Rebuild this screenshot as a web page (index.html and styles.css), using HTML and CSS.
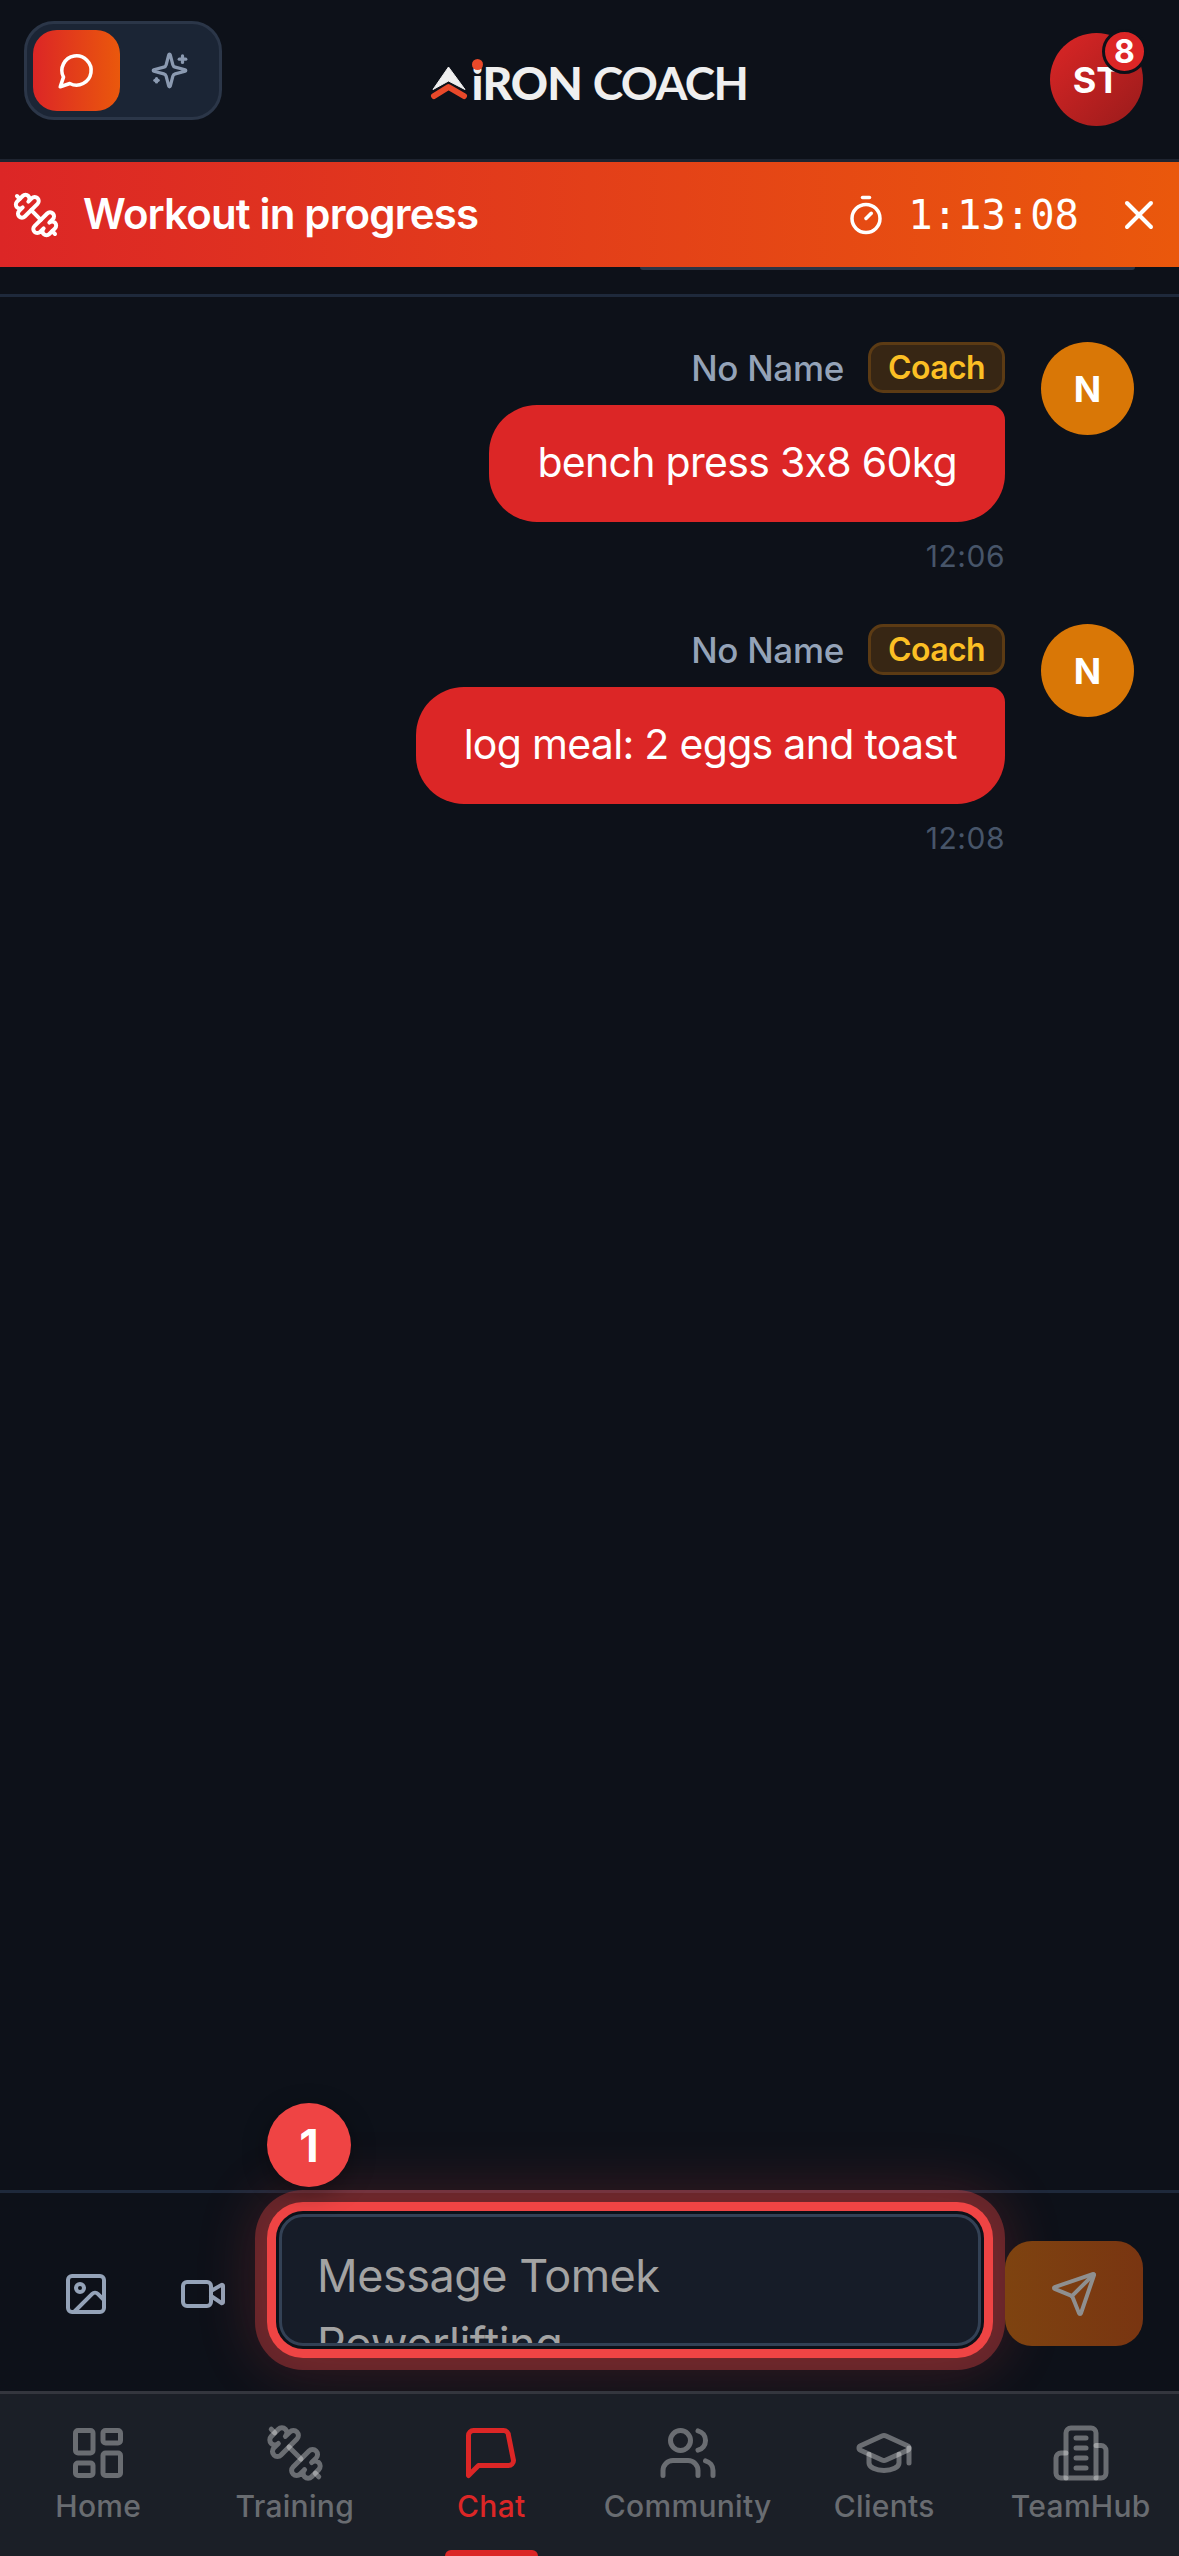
FILE: index.html
```html
<!DOCTYPE html>
<html lang="en">
<head>
<meta charset="utf-8">
<title>AiRON Coach</title>
<link rel="stylesheet" href="styles.css">
</head>
<body>
<div class="app">
  <header class="header">
    <div class="toggle">
      <div class="toggle-btn active">
        <svg class="ic ic39 thick" viewBox="0 0 24 24"><path d="M7.9 20A9 9 0 1 0 4 16.1L2 22Z"/></svg>
      </div>
      <div class="toggle-btn spark">
        <svg class="ic ic39" viewBox="0 0 24 24"><path d="M9.937 15.5A2 2 0 0 0 8.5 14.063l-6.135-1.582a.5.5 0 0 1 0-.962L8.5 9.936A2 2 0 0 0 9.936 8.5l1.582-6.135a.5.5 0 0 1 .963 0L14.063 8.5A2 2 0 0 0 15.5 9.937l6.135 1.581a.5.5 0 0 1 0 .964L15.5 14.063a2 2 0 0 0-1.437 1.437l-1.582 6.135a.5.5 0 0 1-.963 0z"/><path d="M20 3v4"/><path d="M22 5h-4"/><path d="M4 17v2"/><path d="M5 18H3"/></svg>
      </div>
    </div>
    <div class="logo">
      <svg class="logo-mark" viewBox="0 0 38 34"><path class="logo-a" d="M18.5 1 L35 23.500 L18.500 15 L3 23.500 Z"/><path class="logo-chev" d="M4 30 L18.500 21 L34 30"/></svg>
      <span class="logo-iron"><span class="logo-i">i</span>RON</span>
      <span class="logo-coach">COACH</span>
    </div>
    <div class="avatar-wrap">
      <div class="avatar-me">ST</div>
      <div class="avatar-badge">8</div>
    </div>
  </header>

  <div class="banner">
    <div class="banner-left">
      <svg class="ic ic48" viewBox="0 0 24 24"><path d="M14.4 14.4 9.6 9.6"/><path d="M18.657 21.485a2 2 0 1 1-2.829-2.828l-1.767 1.768a2 2 0 1 1-2.829-2.829l6.364-6.364a2 2 0 1 1 2.829 2.829l-1.768 1.767a2 2 0 1 1 2.828 2.829z"/><path d="m21.5 21.5-1.4-1.4"/><path d="M3.9 3.9 2.5 2.5"/><path d="M6.404 12.768a2 2 0 1 1-2.829-2.829l1.768-1.767a2 2 0 1 1-2.828-2.829l2.828-2.828a2 2 0 1 1 2.829 2.828l1.767-1.768a2 2 0 1 1 2.829 2.829z"/></svg>
      <span class="banner-title">Workout in progress</span>
    </div>
    <div class="banner-right">
      <svg class="ic ic42" viewBox="0 0 24 24"><line x1="10" x2="14" y1="2" y2="2"/><line x1="12" x2="15" y1="14" y2="11"/><circle cx="12" cy="14" r="8"/></svg>
      <span class="timer">1:13:08</span>
      <svg class="ic ic48" viewBox="0 0 24 24"><path d="M18 6 6 18"/><path d="m6 6 12 12"/></svg>
    </div>
  </div>

  <div class="pinned"><div class="pinned-edge"></div></div>

  <main class="messages">
    <article class="msg">
      <div class="msg-body">
        <div class="msg-head"><span class="msg-name">No Name</span><span class="role">Coach</span></div>
        <div class="bubble">bench press 3x8 60kg</div>
        <time class="msg-time">12:06</time>
      </div>
      <div class="msg-avatar">N</div>
    </article>
    <article class="msg">
      <div class="msg-body">
        <div class="msg-head"><span class="msg-name">No Name</span><span class="role">Coach</span></div>
        <div class="bubble">log meal: 2 eggs and toast</div>
        <time class="msg-time">12:08</time>
      </div>
      <div class="msg-avatar">N</div>
    </article>
  </main>

  <section class="composer">
    <div class="attach">
      <div class="attach-btn">
        <svg class="ic ic48" viewBox="0 0 24 24"><rect width="18" height="18" x="3" y="3" rx="2" ry="2"/><circle cx="9" cy="9" r="2"/><path d="m21 15-3.086-3.086a2 2 0 0 0-2.828 0L6 21"/></svg>
      </div>
      <div class="attach-btn">
        <svg class="ic ic48" viewBox="0 0 24 24"><path d="m16 13 5.223 3.482a.5.5 0 0 0 .777-.416V7.870a.5.5 0 0 0-.752-.432L16 10.500"/><rect x="2" y="6" width="14" height="12" rx="2"/></svg>
      </div>
    </div>
    <div class="input-wrap">
      <div class="step">1</div>
      <div class="input"><div class="input-text">Message Tomek Powerlifting</div></div>
    </div>
    <div class="send">
      <svg class="ic ic48" viewBox="0 0 24 24"><path d="M14.536 21.686a.5.5 0 0 0 .937-.024l6.500-19a.496.496 0 0 0-.635-.635l-19 6.500a.5.5 0 0 0-.024.937l7.930 3.180a2 2 0 0 1 1.112 1.110z"/><path d="m21.854 2.147-10.940 10.939"/></svg>
    </div>
  </section>

  <nav class="nav">
    <div class="nav-item">
      <svg class="ic ic60" viewBox="0 0 24 24"><rect width="7" height="9" x="3" y="3" rx="1"/><rect width="7" height="5" x="14" y="3" rx="1"/><rect width="7" height="9" x="14" y="12" rx="1"/><rect width="7" height="5" x="3" y="16" rx="1"/></svg>
      <span>Home</span>
    </div>
    <div class="nav-item">
      <svg class="ic ic60" viewBox="0 0 24 24"><path d="M14.4 14.4 9.6 9.6"/><path d="M18.657 21.485a2 2 0 1 1-2.829-2.828l-1.767 1.768a2 2 0 1 1-2.829-2.829l6.364-6.364a2 2 0 1 1 2.829 2.829l-1.768 1.767a2 2 0 1 1 2.828 2.829z"/><path d="m21.5 21.5-1.4-1.4"/><path d="M3.9 3.9 2.500 2.500"/><path d="M6.404 12.768a2 2 0 1 1-2.829-2.829l1.768-1.767a2 2 0 1 1-2.828-2.829l2.828-2.828a2 2 0 1 1 2.829 2.828l1.767-1.768a2 2 0 1 1 2.829 2.829z"/></svg>
      <span>Training</span>
    </div>
    <div class="nav-item current">
      <svg class="ic ic60" viewBox="0 0 24 24"><path d="M21 15a2 2 0 0 1-2 2H7l-4 4V5a2 2 0 0 1 2-2h12a2 2 0 0 1 2 2z"/></svg>
      <span>Chat</span>
    </div>
    <div class="nav-item">
      <svg class="ic ic60" viewBox="0 0 24 24"><path d="M16 21v-2a4 4 0 0 0-4-4H6a4 4 0 0 0-4 4v2"/><circle cx="9" cy="7" r="4"/><path d="M22 21v-2a4 4 0 0 0-3-3.870"/><path d="M16 3.130a4 4 0 0 1 0 7.750"/></svg>
      <span>Community</span>
    </div>
    <div class="nav-item">
      <svg class="ic ic60" viewBox="0 0 24 24"><path d="M21.420 10.922a1 1 0 0 0-.019-1.838L12.830 5.180a2 2 0 0 0-1.660 0L2.600 9.080a1 1 0 0 0 0 1.832l8.570 3.908a2 2 0 0 0 1.660 0z"/><path d="M22 10v6"/><path d="M6 12.500V16a6 3 0 0 0 12 0v-3.500"/></svg>
      <span>Clients</span>
    </div>
    <div class="nav-item">
      <svg class="ic ic60" viewBox="0 0 24 24"><path d="M6 22V4a2 2 0 0 1 2-2h8a2 2 0 0 1 2 2v18Z"/><path d="M6 12H4a2 2 0 0 0-2 2v6a2 2 0 0 0 2 2h2"/><path d="M18 9h2a2 2 0 0 1 2 2v9a2 2 0 0 1-2 2h-2"/><path d="M10 6h4"/><path d="M10 10h4"/><path d="M10 14h4"/><path d="M10 18h4"/></svg>
      <span>TeamHub</span>
    </div>
  </nav>
</div>
</body>
</html>
```
FILE: styles.css
```css
* { box-sizing: border-box; }
html, body { margin: 0; padding: 0; background: #0d1119; }
body {
  font-family: Inter, "Noto Sans", sans-serif;
  font-feature-settings: "calt" 0;
  color: #fff;
}

.app {
  width: 1179px;
  height: 2556px;
  display: flex;
  flex-direction: column;
  overflow: hidden;
  background: #0d1119;
}

.ic {
  fill: none;
  stroke: currentColor;
  stroke-width: 2;
  stroke-linecap: round;
  stroke-linejoin: round;
  flex: none;
  display: block;
}
.ic39 { width: 39px; height: 39px; }
.ic39.thick { stroke-width: 2.2; }
.ic42 { width: 42px; height: 42px; }
.ic48 { width: 48px; height: 48px; }
.ic60 { width: 60px; height: 60px; }

/* Header */
.header {
  height: 162px;
  flex: none;
  display: grid;
  grid-template-columns: 1fr auto 1fr;
  align-items: start;
  padding: 0 36px 0 24px;
  border-bottom: 3px solid #1e2430;
}
.toggle {
  justify-self: start;
  margin-top: 21px;
  display: flex;
  gap: 6px;
  padding: 6px;
  border: 3px solid #2b3648;
  border-radius: 30px;
  background: #1b2535;
}
.toggle-btn {
  width: 87px;
  height: 81px;
  border-radius: 24px;
  display: flex;
  align-items: center;
  justify-content: center;
}
.toggle-btn.active { background: linear-gradient(90deg, #dc2626, #ea580c); color: #fff; }
.toggle-btn.spark { color: #8b9ab1; }

.logo {
  margin: 60px 0 0 10px;
  display: flex;
  align-items: center;
  color: #efefef;
  font-family: Lato, Inter, sans-serif;
  font-size: 46px;
  line-height: 46px;
  white-space: nowrap;
}
.logo-mark { width: 38px; height: 34px; margin-right: 4px; flex: none; }
.logo-a { fill: #efefef; stroke: #efefef; stroke-width: 1; stroke-linejoin: round; }
.logo-chev { fill: none; stroke: #e8492a; stroke-width: 6; stroke-linecap: round; stroke-linejoin: round; }
.logo-iron { font-weight: 900; margin-right: 11px; letter-spacing: -1px; }
.logo-coach { font-weight: 700; letter-spacing: -1.6px; }
.logo-i { position: relative; }
.logo-i::after {
  content: "";
  position: absolute;
  left: 0;
  top: 4px;
  width: 11px;
  height: 11px;
  border-radius: 50%;
  background: #e8492a;
}

.avatar-wrap {
  justify-self: end;
  margin-top: 33px;
  position: relative;
  width: 93px;
  height: 93px;
}
.avatar-me {
  width: 93px;
  height: 93px;
  border-radius: 50%;
  background: linear-gradient(135deg, #dc2626, #991b1b);
  display: flex;
  align-items: center;
  justify-content: center;
  font-size: 36px;
  font-weight: 700;
}
.avatar-badge {
  position: absolute;
  left: 52px;
  top: -4px;
  width: 45px;
  height: 45px;
  border-radius: 50%;
  border: 3px solid #0d1119;
  background: #dc2626;
  display: flex;
  align-items: center;
  justify-content: center;
  font-size: 32px;
  font-weight: 700;
}

/* Workout banner */
.banner {
  height: 105px;
  flex: none;
  position: relative;
  display: flex;
  align-items: center;
  justify-content: space-between;
  padding: 0 16px 0 12px;
  background: linear-gradient(90deg, #dc2626, #ea580c);
}
.banner-left { display: flex; align-items: center; gap: 23px; }
.banner-title { font-size: 42px; font-weight: 600; letter-spacing: -0.84px; padding-bottom: 3px; }
.banner-right { display: flex; align-items: center; }
.timer {
  font-family: "DejaVu Sans Mono", monospace;
  font-size: 40.5px;
  margin-left: 21px;
  margin-right: 36px;
}

.pinned {
  height: 30px;
  flex: none;
  border-bottom: 3px solid #1e293b;
  display: flex;
  justify-content: flex-end;
  padding-right: 44px;
}
.pinned-edge {
  width: 495px;
  height: 3px;
  background: #2b3445;
  border-radius: 0 0 12px 12px;
}

/* Messages */
.messages {
  flex: 1;
  min-height: 0;
  padding: 45px 45px 0 0;
  display: flex;
  flex-direction: column;
  gap: 45px;
}
.msg { display: flex; justify-content: flex-end; align-items: flex-start; gap: 36px; }
.msg-body { display: flex; flex-direction: column; align-items: flex-end; }
.msg-head { height: 51px; display: flex; align-items: center; gap: 24px; }
.msg-name { font-size: 35px; font-weight: 500; letter-spacing: -0.3px; color: #94a3b8; }
.role {
  height: 51px;
  padding: 0 17px;
  display: flex;
  align-items: center;
  border: 3px solid #5c3b14;
  border-radius: 15px;
  background: #372614;
  color: #fbbf24;
  font-size: 32px;
  font-weight: 600;
  letter-spacing: -0.6px;
}
.bubble {
  margin-top: 12px;
  height: 117px;
  padding: 0 48px 3px;
  display: flex;
  align-items: center;
  background: #dc2626;
  border-radius: 48px 15px 48px 48px;
  font-size: 41px;
  letter-spacing: -0.7px;
  white-space: nowrap;
}
.msg-time {
  margin-top: 12px;
  font-size: 30px;
  line-height: 45px;
  letter-spacing: 0.5px;
  color: #475569;
}
.msg-avatar {
  width: 93px;
  height: 93px;
  flex: none;
  border-radius: 50%;
  background: #d97706;
  display: flex;
  align-items: center;
  justify-content: center;
  font-size: 36px;
  font-weight: 700;
}

/* Composer */
.composer {
  height: 201px;
  flex: none;
  border-top: 3px solid #1e293b;
  display: flex;
  align-items: flex-end;
  gap: 24px;
  padding: 0 36px 45px 33px;
}
.attach { display: flex; gap: 12px; }
.attach-btn {
  width: 105px;
  height: 105px;
  display: flex;
  align-items: center;
  justify-content: center;
  color: #94a3b8;
}
.input-wrap { flex: 1; min-width: 0; position: relative; }
.input {
  height: 132px;
  padding: 25px 120px 0 35px;
  border: 3px solid #334155;
  border-radius: 24px;
  background: #161c28;
  overflow: hidden;
  box-shadow:
    0 0 0 3px #0d1119,
    0 0 0 12px #ef4444,
    0 0 0 24px rgba(239, 68, 68, 0.35),
    0 0 60px 24px rgba(239, 68, 68, 0.2);
}
.input-text { font-size: 45px; line-height: 67.5px; letter-spacing: -0.5px; color: #a3a3a3; }
.step {
  position: absolute;
  left: -12px;
  top: -111px;
  width: 84px;
  height: 84px;
  border-radius: 50%;
  background: #ef4444;
  display: flex;
  align-items: center;
  justify-content: center;
  font-size: 45px;
  font-weight: 700;
  box-shadow: 0 6px 24px rgba(0, 0, 0, 0.35);
}
.send {
  position: relative;
  width: 138px;
  height: 105px;
  flex: none;
  border-radius: 27px;
  background: linear-gradient(90deg, #7e4310, #793511);
  display: flex;
  align-items: center;
  justify-content: center;
  color: #8f8f8f;
}

/* Bottom nav */
.nav {
  height: 165px;
  flex: none;
  position: relative;
  display: grid;
  grid-template-columns: repeat(6, 1fr);
  padding-top: 29px;
  border-top: 3px solid rgba(70, 70, 78, 0.6);
  background: rgba(28, 32, 40, 0.97);
}
.nav-item {
  position: relative;
  display: flex;
  flex-direction: column;
  align-items: center;
  gap: 5px;
  color: rgba(255, 255, 255, 0.35);
  font-size: 30px;
  line-height: 36px;
  font-weight: 500;
  letter-spacing: 0.3px;
}
.nav-item.current { color: #dc2626; }
.nav-item.current::after {
  content: "";
  position: absolute;
  left: 50%;
  bottom: 0;
  width: 93px;
  height: 6px;
  margin-left: -46.5px;
  border-radius: 6px 6px 0 0;
  background: #dc2626;
}
```
